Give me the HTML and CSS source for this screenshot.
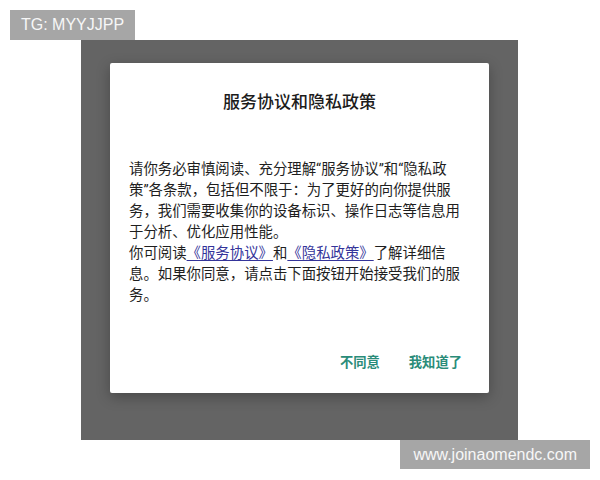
FILE: index.html
```html
<!DOCTYPE html>
<html lang="zh-CN">
<head>
<meta charset="utf-8">
<title>服务协议和隐私政策</title>
<link rel="stylesheet" href="styles.css">
</head>
<body>
<div class="page">
  <div class="tag">TG: MYYJJPP</div>
  <div class="backdrop">
    <div class="dialog">
      <h1 class="dialog-title">服务协议和隐私政策</h1>
      <div class="dialog-body">
        <p class="para">请你务必审慎阅读、充分理解“服务协议”和“隐私政策”各条款，包括但不限于：为了更好的向你提供服务，我们需要收集你的设备标识、操作日志等信息用于分析、优化应用性能。</p>
        <p class="para">你可阅读<a class="link" href="#">《服务协议》</a>和<a class="link" href="#">《隐私政策》</a>了解详细信息。如果你同意，请点击下面按钮开始接受我们的服务。</p>
      </div>
      <div class="dialog-actions">
        <button class="action" type="button">不同意</button>
        <button class="action" type="button">我知道了</button>
      </div>
    </div>
  </div>
  <div class="site">www.joinaomendc.com</div>
</div>
</body>
</html>
```

FILE: styles.css
```css
html, body {
  margin: 0;
  padding: 0;
  background: #ffffff;
}

.page {
  width: 600px;
  height: 480px;
  padding-top: 10px;
  box-sizing: border-box;
  display: flex;
  flex-direction: column;
  font-family: "Roboto", "Noto Sans CJK SC", sans-serif;
}

.tag {
  align-self: flex-start;
  margin-left: 10px;
  height: 30px;
  line-height: 30px;
  padding: 0 11px;
  background: #a6a6a6;
  color: #f7f7f7;
  font-family: "Liberation Sans", Arial, sans-serif;
  font-size: 16px;
}

.backdrop {
  margin-left: 81px;
  width: 437px;
  height: 400px;
  box-sizing: border-box;
  padding: 23px 29px 0;
  background: #646464;
}

.dialog {
  background: #ffffff;
  border-radius: 2px;
  box-shadow: 0 4px 14px rgba(0, 0, 0, 0.28);
  padding: 27px 0 20px;
  height: 330px;
  box-sizing: border-box;
  display: flex;
  flex-direction: column;
}

.dialog-title {
  margin: 0;
  text-align: center;
  font-size: 17px;
  line-height: 24px;
  font-weight: 500;
  color: #1c1c1c;
}

.dialog-body {
  margin-top: 45px;
  padding-left: 19px;
  width: 336px;
  color: #1e1e1e;
  font-size: 14.4px;
  line-height: 21px;
}

.para {
  margin: 0;
}

.link {
  color: #34349a;
  text-decoration: underline;
  text-underline-offset: 2px;
  text-decoration-thickness: 1px;
}

.dialog-actions {
  margin-top: auto;
  display: flex;
  justify-content: flex-end;
  gap: 13px;
  padding-right: 19px;
}

.action {
  border: none;
  background: transparent;
  padding: 0 8px;
  margin: 0;
  height: 20px;
  line-height: 20px;
  font-family: "Roboto", "Noto Sans CJK SC", sans-serif;
  font-size: 13.3px;
  font-weight: 700;
  color: #2a8c79;
  cursor: pointer;
}

.site {
  align-self: flex-end;
  margin-right: 10px;
  height: 29px;
  line-height: 29px;
  padding: 0 13px;
  background: #a6a6a6;
  color: #f7f7f7;
  font-family: "Liberation Sans", Arial, sans-serif;
  font-size: 16px;
}
```
